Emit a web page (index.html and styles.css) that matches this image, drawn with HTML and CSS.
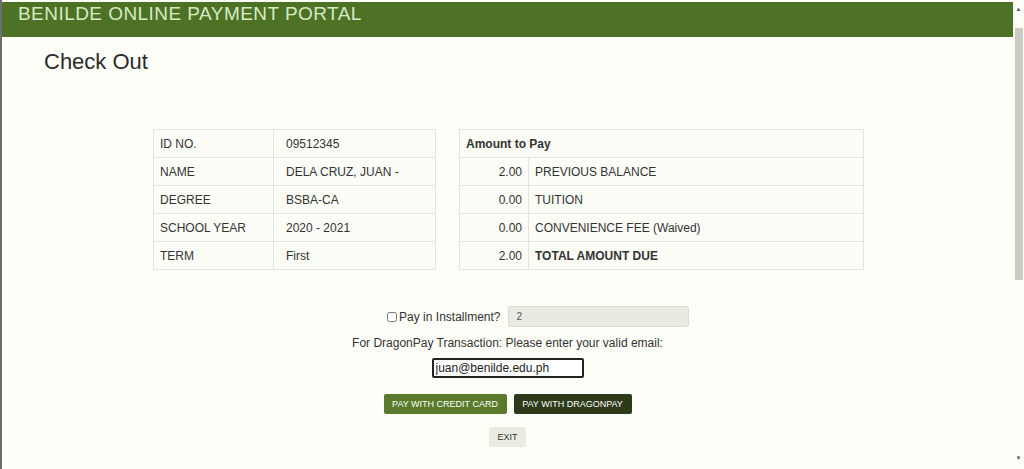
FILE: index.html
```html
<!DOCTYPE html>
<html lang="en">
<head>
    <meta charset="UTF-8">
    <meta name="viewport" content="width=device-width, initial-scale=1.0">
    <title>Benilde Online Payment Portal - Check Out</title>
    <link rel="stylesheet" href="styles.css">
</head>
<body>

    <div class="frame">
        <div class="page">
            <header class="topbar">BENILDE ONLINE PAYMENT PORTAL</header>

            <div class="content">
                <h1>Check Out</h1>

                <!-- Student info + amounts -->
                <div class="tables">
                    <table class="info">
                        <tr><td class="label">ID NO.</td><td>09512345</td></tr>
                        <tr><td class="label">NAME</td><td>DELA CRUZ, JUAN -</td></tr>
                        <tr><td class="label">DEGREE</td><td>BSBA-CA</td></tr>
                        <tr><td class="label">SCHOOL YEAR</td><td>2020 - 2021</td></tr>
                        <tr><td class="label">TERM</td><td>First</td></tr>
                    </table>

                    <table class="amounts">
                        <tr><th colspan="2">Amount to Pay</th></tr>
                        <tr><td class="amt">2.00</td><td>PREVIOUS BALANCE</td></tr>
                        <tr><td class="amt">0.00</td><td>TUITION</td></tr>
                        <tr><td class="amt">0.00</td><td>CONVENIENCE FEE (Waived)</td></tr>
                        <tr><td class="amt">2.00</td><td class="total">TOTAL AMOUNT DUE</td></tr>
                    </table>
                </div>

                <!-- Payment form -->
                <div class="installment">
                    <label class="check"><input type="checkbox"> Pay in Installment?</label>
                    <input type="text" class="terms" value="2" disabled>
                </div>

                <p class="note">For DragonPay Transaction: Please enter your valid email:</p>
                <input type="text" class="email" value="juan@benilde.edu.ph">

                <div class="buttons">
                    <button class="btn credit">PAY WITH CREDIT CARD</button>
                    <button class="btn dragon">PAY WITH DRAGONPAY</button>
                </div>
                <button class="btn exit">EXIT</button>
            </div>
        </div>

        <!-- scrollbar -->
        <div class="scrollbar">
            <span class="arrow">&#9650;</span>
            <div class="thumb"></div>
            <span class="arrow down">&#9660;</span>
        </div>
    </div>

</body>
</html>
```

FILE: styles.css
```css
body {
    margin: 0;
    padding: 0;
    font-family: 'Liberation Sans', Arial, sans-serif;
    background-color: #fefef8;
    color: #333;
}

.frame {
    display: flex;
    height: 469px;
    border-left: 2px solid #6e6e6e;
    box-sizing: border-box;
    padding-top: 2px;
    background-color: #fefef8;
}

.page {
    flex: 1;
    min-width: 0;
    display: flex;
    flex-direction: column;
}

/* Green title bar */
.topbar {
    background-color: #4d7226;
    color: #d6ebc2;
    font-size: 19px;
    height: 35px;
    line-height: 23px;
    padding-left: 16px;
    letter-spacing: 0.45px;
}

.content {
    display: flex;
    flex-direction: column;
    align-items: center;
}

h1 {
    align-self: flex-start;
    margin: 12px 0 0 42px;
    font-size: 22px;
    font-weight: normal;
    color: #2b2b2b;
    height: 80px;
}

.tables {
    display: flex;
    gap: 23px;
    margin-left: 2px;
}

table {
    border-collapse: collapse;
    font-size: 12px;
    background-color: #fdfdf7;
}

td, th {
    border: 1px solid #e4e4dc;
    height: 27px;
    padding: 0 6px;
    text-align: left;
}

.info {
    width: 283px;
}

.info .label {
    width: 107px;
}

.info td:last-child {
    padding-left: 12px;
}

.amounts {
    width: 405px;
}

.amounts th {
    font-weight: bold;
}

.amounts .amt {
    width: 56px;
    text-align: right;
}

.amounts .total {
    font-weight: bold;
}

/* Form */
.installment {
    display: grid;
    grid-template-columns: 1fr 1fr;
    width: 100%;
    margin-top: 36px;
    align-items: center;
}

.check {
    justify-self: end;
    margin-right: 7px;
    font-size: 12px;
    display: flex;
    align-items: center;
    gap: 2px;
}

.check input {
    margin: 0;
    width: 10px;
    height: 10px;
}

.terms {
    width: 181px;
    height: 21px;
    box-sizing: border-box;
    border: 1px solid #dcdcd4;
    border-radius: 2px;
    background-color: #e9ebe3;
    font-size: 10px;
    padding: 0 8px;
    color: #555;
    font-family: 'Liberation Sans', Arial, sans-serif;
}

.note {
    font-size: 12px;
    margin: 9px 0 8px;
    color: #333;
}

.email {
    width: 152px;
    height: 20px;
    box-sizing: border-box;
    border: 2px solid #222;
    border-radius: 2px;
    background-color: #fff;
    padding: 0 2px;
    font-size: 12px;
    color: #222;
    font-family: 'Liberation Sans', Arial, sans-serif;
}

.buttons {
    display: flex;
    gap: 7px;
    margin-top: 16px;
}

.btn {
    border: none;
    border-radius: 2px;
    font-family: 'Liberation Sans', Arial, sans-serif;
    font-size: 9px;
    height: 20px;
    padding: 0;
    color: #fff;
    white-space: nowrap;
    cursor: pointer;
}

.credit {
    background-color: #5a7b2c;
    width: 123px;
}

.dragon {
    background-color: #2c3a1a;
    width: 118px;
}

.exit {
    margin-top: 13px;
    width: 37px;
    background-color: #ebebe4;
    color: #333;
}

/* Fake scrollbar on the right */
.scrollbar {
    width: 11px;
    flex-shrink: 0;
    display: flex;
    flex-direction: column;
    align-items: center;
    background-color: #fefef8;
}

.arrow {
    font-size: 6px;
    color: #555;
    height: 20px;
    line-height: 14px;
}

.arrow.down {
    margin-top: auto;
    line-height: 18px;
}

.thumb {
    width: 8px;
    height: 252px;
    background-color: #cbcbc3;
    margin-top: 6px;
}
```
